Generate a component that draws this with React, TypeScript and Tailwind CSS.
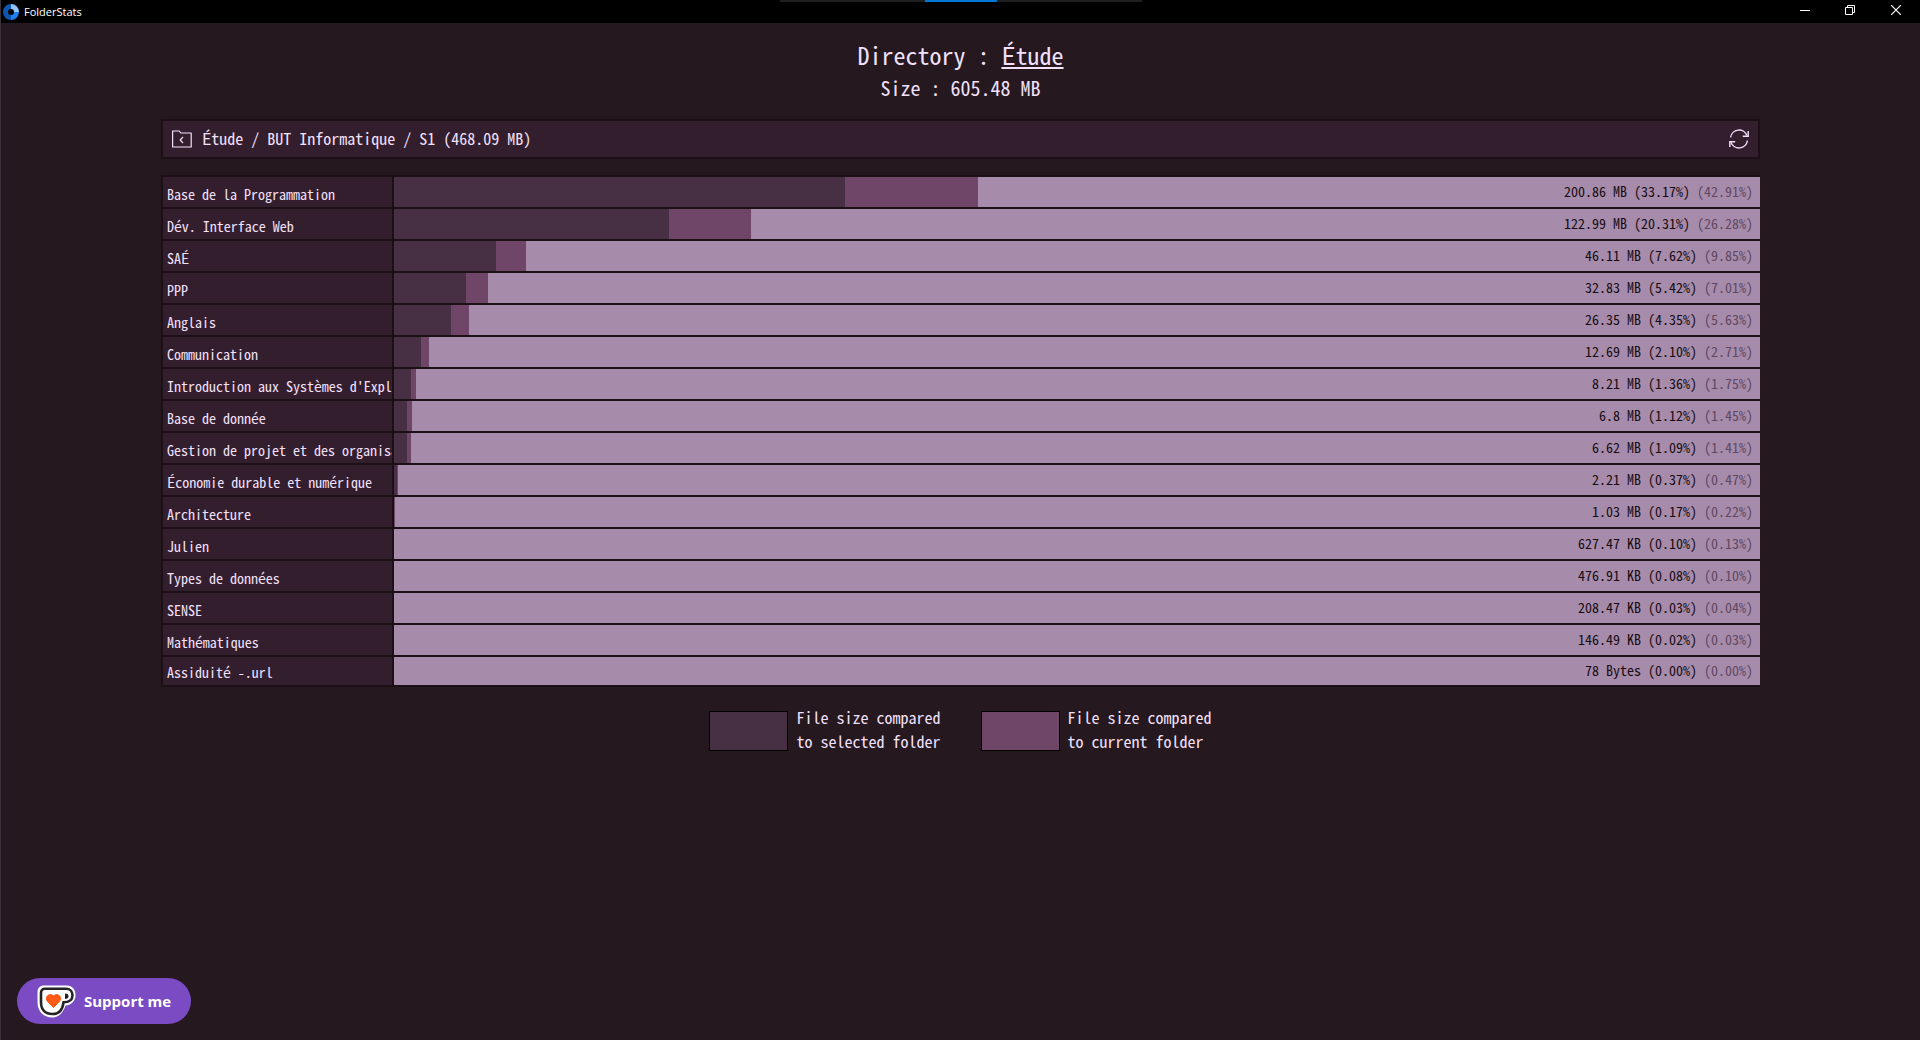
type Entry = {
  name: string;
  size: string;
  total: number;
  current: number;
};

const entries: Entry[] = [
  { name: "Base de la Programmation", size: "200.86 MB", total: 33.17, current: 42.91 },
  { name: "Dév. Interface Web", size: "122.99 MB", total: 20.31, current: 26.28 },
  { name: "SAÉ", size: "46.11 MB", total: 7.62, current: 9.85 },
  { name: "PPP", size: "32.83 MB", total: 5.42, current: 7.01 },
  { name: "Anglais", size: "26.35 MB", total: 4.35, current: 5.63 },
  { name: "Communication", size: "12.69 MB", total: 2.1, current: 2.71 },
  { name: "Introduction aux Systèmes d'Exploitation", size: "8.21 MB", total: 1.36, current: 1.75 },
  { name: "Base de donnée", size: "6.8 MB", total: 1.12, current: 1.45 },
  { name: "Gestion de projet et des organisations", size: "6.62 MB", total: 1.09, current: 1.41 },
  { name: "Économie durable et numérique", size: "2.21 MB", total: 0.37, current: 0.47 },
  { name: "Architecture", size: "1.03 MB", total: 0.17, current: 0.22 },
  { name: "Julien", size: "627.47 KB", total: 0.1, current: 0.13 },
  { name: "Types de données", size: "476.91 KB", total: 0.08, current: 0.1 },
  { name: "SENSE", size: "208.47 KB", total: 0.03, current: 0.04 },
  { name: "Mathématiques", size: "146.49 KB", total: 0.02, current: 0.03 },
  { name: "Assiduité -.url", size: "78 Bytes", total: 0, current: 0 },
];

const TitleBar = () => {
  return (
    <header className="relative flex h-[23px] items-center justify-between bg-black text-white">
      <div className="flex items-center gap-[5px] pl-[2px]">
        <svg width="16" height="16" viewBox="0 0 16 16" aria-hidden="true">
          <path d="M8 0a8 8 0 0 1 8 8h-5a3 3 0 0 0-3-3z" fill="#8fc4fa" />
          <path d="M16 8a8 8 0 0 1-8 8v-5a3 3 0 0 0 3-3z" fill="#1e80ee" />
          <path d="M8 16A8 8 0 0 1 8 0v5a3 3 0 0 0 0 6z" fill="#0d56b4" />
        </svg>
        <span className="font-['Open_Sans',sans-serif] text-[11px] leading-4">FolderStats</span>
      </div>
      <div className="absolute top-0 left-1/2 flex h-[2px] w-[362px] -translate-x-1/2 justify-center bg-[#1f1f1f]">
        <div className="w-[72px] bg-[#0078d7]" />
      </div>
      <div className="flex h-full pb-[3px]">
        <button type="button" aria-label="Minimize" className="grid w-[45px] place-items-center">
          <svg width="10" height="10" viewBox="0 0 10 10" stroke="currentColor">
            <path d="M0 5.5h10" />
          </svg>
        </button>
        <button type="button" aria-label="Restore" className="grid w-[45px] place-items-center">
          <svg width="10" height="10" viewBox="0 0 10 10" fill="none" stroke="currentColor">
            <path d="M.5 2.5h7v7h-7zM2.5 2.5v-2h7v7h-2" />
          </svg>
        </button>
        <button type="button" aria-label="Close" className="grid w-12 place-items-center">
          <svg width="10" height="10" viewBox="0 0 10 10" stroke="currentColor" strokeWidth="1.2">
            <path d="M0 0l10 10M10 0L0 10" />
          </svg>
        </button>
      </div>
    </header>
  );
};

const PathBar = () => {
  return (
    <nav className="flex h-10 items-center justify-between border-2 border-[#1d0f16] bg-[#331e2e] pr-[9px] pl-[9px]">
      <div className="flex items-center gap-[10px]">
        <button type="button" aria-label="Parent folder">
          <svg width="20" height="18" viewBox="0 0 20 18" fill="none" stroke="currentColor" strokeWidth="1.2">
            <path d="M.6 17V1h6.600l1.600 2h10.400v14z" strokeLinejoin="round" />
            <path d="M11 7L8.200 10l2.800 3" />
          </svg>
        </button>
        <span className="pb-[2px] text-base leading-5">Étude / BUT Informatique / S1 (468.09 MB)</span>
      </div>
      <button type="button" aria-label="Refresh">
        <svg width="20" height="20" viewBox="0 0 20 20" fill="none" stroke="currentColor" strokeWidth="1.4">
          <path d="M1.600 8.400A8.500 8.500 0 0 1 18 6.600M18.400 11.600A8.500 8.500 0 0 1 2 13.400" />
          <path d="M19.200 2v5.300h-5.400M.8 18v-5.300h5.400" />
        </svg>
      </button>
    </nav>
  );
};

const EntryRow = ({ entry }: { entry: Entry }) => {
  return (
    <tr className="group">
      <th scope="row" className="border-r-2 border-b-2 border-[#1d0f16] bg-[#331e2e] p-0 text-left font-normal">
        <div className="h-[30px] overflow-hidden pt-[3px] pl-1 leading-7 whitespace-nowrap group-last:h-7 group-last:pt-px">
          {entry.name}
        </div>
      </th>
      <td className="border-b-2 border-[#1d0f16] bg-[#a78bab] p-0">
        <div className="relative flex h-[30px] items-center justify-end overflow-hidden pr-[7px] text-[#160b12] group-last:h-7">
          <div className="absolute inset-y-0 -left-0.5 bg-[#6f4668]" style={{ width: `${entry.current}%` }} />
          <div className="absolute inset-y-0 -left-0.5 bg-[#472f44]" style={{ width: `${entry.total}%` }} />
          <span className="pb-[2px] leading-5">
            {entry.size} ({entry.total.toFixed(2)}%){" "}
            <span className="text-[#5f4863]">({entry.current.toFixed(2)}%)</span>
          </span>
        </div>
      </td>
    </tr>
  );
};

const Legend = () => {
  return (
    <div className="mt-[18px] flex justify-center gap-10 text-base leading-6">
      <div className="flex gap-2">
        <div className="mt-[6px] h-10 w-[79px] border border-black bg-[#472f44]" />
        <p>
          File size compared
          <br />
          to selected folder
        </p>
      </div>
      <div className="flex gap-2">
        <div className="mt-[6px] h-10 w-[79px] border border-black bg-[#6f4668]" />
        <p>
          File size compared
          <br />
          to current folder
        </p>
      </div>
    </div>
  );
};

const SupportButton = () => {
  return (
    <button
      type="button"
      className="fixed bottom-4 left-[17px] flex h-[46px] items-center gap-2 rounded-full bg-[#7a4bc3] px-5 text-white"
    >
      <svg width="39" height="33" viewBox="0 0 39 33" aria-hidden="true">
        <path
          d="M7 .5h23c5 0 8.500 4 8.500 9.500 0 6-4 10-10 10.500C26.500 27 22 32.500 15.500 32.500 6 32.500.5 26 .5 17V7C.5 3 3 .5 7 .5z"
          fill="#fff"
        />
        <path
          d="M8 3.800H29c4 0 6.500 2.500 6.500 6.500 0 4.500-3 7-9 7-.8 7-4.500 11.700-11 11.700C8 29 4 24.500 4 17V8c0-2.700 1.500-4.200 4-4.200z"
          fill="#fff"
          stroke="#242424"
          strokeWidth="2.600"
        />
        <path
          d="M16.500 22.500l-6-6c-3.500-4 1.500-9.500 6-5.500 4.500-4 9.500 1.500 6 5.500z"
          fill="#ff5a16"
          stroke="#ff5a16"
        />
        <path d="M28 8.500c2.500 0 3.500 1 3.500 2.700s-1.200 2.800-3.500 2.800z" fill="#242424" />
      </svg>
      <span className="pb-px font-['Open_Sans',sans-serif] text-[15px] leading-6 font-bold">Support me</span>
    </button>
  );
};

export default function App() {
  return (
    <div className="min-h-screen border-l border-[#3a3238] bg-[#25181f] font-['Noto_Sans_Mono_CJK_JP','DejaVu_Sans_Mono',monospace] text-[#f3e1fb]">
      <TitleBar />
      <main className="mx-auto w-5/6 pt-[14px]">
        <h1 className="text-center text-2xl leading-9">
          Directory :{" "}
          <a href="#" className="underline decoration-2 underline-offset-2">
            Étude
          </a>
        </h1>
        <p className="mt-px mb-[17px] text-center text-xl leading-7">Size : 605.48 MB</p>
        <PathBar />
        <table className="mt-4 w-full table-fixed border-separate border-spacing-0 border-t-2 border-l-2 border-[#1d0f16] text-sm">
          <colgroup>
            <col className="w-[231px]" />
            <col />
          </colgroup>
          <tbody>
            {entries.map((entry) => (
              <EntryRow key={entry.name} entry={entry} />
            ))}
          </tbody>
        </table>
        <Legend />
      </main>
      <SupportButton />
    </div>
  );
}
